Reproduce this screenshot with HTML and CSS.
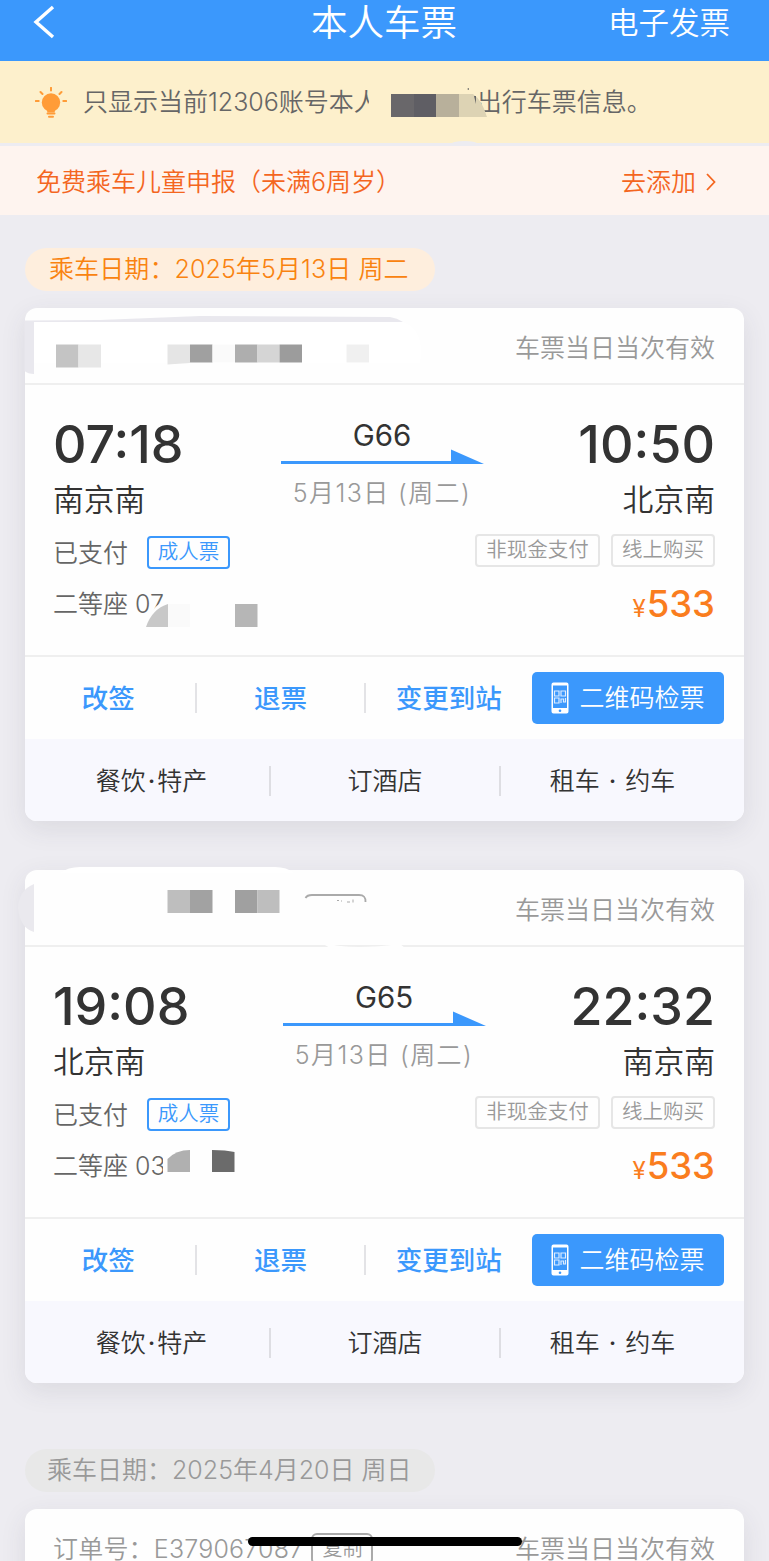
FILE: index.html
```html
<!DOCTYPE html>
<html lang="zh-CN">
<head>
    <meta charset="UTF-8">
    <meta name="viewport" content="width=device-width, initial-scale=1.0">
    <title>本人车票</title>
    <link rel="stylesheet" href="styles.css">
</head>
<body>
    <div class="header">
        <svg class="back" width="24" height="34" viewBox="0 0 24 34"><path d="M20 2 L3 17 L20 32" fill="none" stroke="#fff" stroke-width="3.4"/></svg>
        <h1>本人车票</h1>
        <span class="invoice">电子发票</span>
    </div>

    <div class="notice">
        <svg class="bulb" width="32" height="32" viewBox="0 0 32 32">
            <circle cx="16" cy="15.5" r="9.2" fill="#ff9c38"/>
            <path d="M11 20 L21 20 L19.5 25.5 L12.500 25.5 Z" fill="#ff9c38"/>
            <path d="M16 0.800 V3.500 M5.500 5 L7.500 7 M26.500 5 L24.500 7 M0.800 14 H3.700 M28.300 14 H31.200 M12.500 26.500 H19.500 M14 29.700 H18" stroke="#ff9c38" stroke-width="2" stroke-linecap="round"/>
        </svg>
        <span class="notice-text">只显示当前12306账号本人</span>
        <span class="notice-text notice-rest">出行车票信息。</span>
        <svg class="mask" width="130" height="66" viewBox="0 0 130 66">
            <path d="M3 15 H104 L110 27 V50 H-6 L1 33 Z" fill="#fdf0cc"/>
            <path d="M23 25 H46 V48 H23 Z" fill="#69676a"/>
            <path d="M46 25 H68 V48 H46 Z" fill="#5f5e64"/>
            <path d="M68 25 H91 V48 H68 Z" fill="#b8b09b"/>
            <path d="M91 25 H105 Q114 31 119 48 H91 Z" fill="#ddd3b4"/>
            <path d="M99 20 l2 -1 v2 z M106 27 h2 v8 z" fill="#666"/>
            <path d="M81 76 Q84 72 97 72 Q108 72 112 76 Z" fill="#edecf1"/>
        </svg>
    </div>

    <div class="child-bar">
        <span>免费乘车儿童申报（未满6周岁）</span>
        <span class="add">去添加
            <svg width="12" height="20" viewBox="0 0 12 20"><path d="M2 2 L9.500 10 L2 18" fill="none" stroke="#f4661f" stroke-width="1.800"/></svg>
        </span>
    </div>

    <div class="content">
        <div class="date-pill">乘车日期：2025年5月13日 周二</div>

        <div class="card">
            <div class="card-head">
                <span class="valid">车票当日当次有效</span>
                <svg class="mask head-mask" width="440" height="76" viewBox="0 0 440 76">
                    <path d="M24.500 12.500 L100 12 L200 8 L390 9 Q397 10 403 14 H34 V66 Q28 66 24.500 63 Z" fill="#e9e8ee"/>
                    <path d="M34 14 H403 Q425 22 420 55 H34 Z" fill="#fff"/>
                    <path d="M56 36.500 h22.500 v23 h-22.500 z" fill="#c4c4c4"/>
                    <path d="M78.500 36.500 h22.500 v23 h-22.500 z" fill="#e7e7e7"/>
                    <path d="M167.500 36.500 h22.500 v18.500 l-22.500 1.500 z" fill="#e5e5e5"/>
                    <path d="M190 36.500 h22.500 v18 h-22.500 z" fill="#a0a0a0"/>
                    <path d="M212.500 36.500 h22.500 v18 h-22.500 z" fill="#fafafa"/>
                    <path d="M235 36.500 h22.500 v18 h-22.500 z" fill="#aeaeae"/>
                    <path d="M257.500 36.500 h22 v18 h-22 z" fill="#d5d5d5"/>
                    <path d="M279.500 36.500 h22.500 v18 h-22.500 z" fill="#9c9c9c"/>
                    <path d="M346.500 36.500 h22.500 v18 h-22.500 z" fill="#f0f0f0"/>
                </svg>
            </div>
            <div class="card-body">
                <div class="trip">
                    <div class="stop">
                        <div class="time">07:18</div>
                        <div class="station">南京南</div>
                    </div>
                    <div class="train">
                        <div class="train-no">G66</div>
                        <svg class="arrow" width="203" height="16" viewBox="0 0 203 16"><path d="M0 12 H170 V0.500 L203 15 H0 Z" fill="#3b98fc"/></svg>
                        <div class="train-date">5月13日 (周二)</div>
                    </div>
                    <div class="stop stop-end">
                        <div class="time">10:50</div>
                        <div class="station">北京南</div>
                    </div>
                </div>
                <div class="status">
                    <span class="paid">已支付</span>
                    <span class="tag tag-blue">成人票</span>
                    <span class="tag tag-gray">非现金支付</span>
                    <span class="tag tag-gray">线上购买</span>
                </div>
                <div class="seat">
                    <span>二等座 07</span>
                    <span class="price"><small>¥</small>533</span>
                    <svg class="mask seat-mask" width="150" height="50" viewBox="0 0 150 50">
                        <path d="M9 38 Q14 17 32 10 H120 V40 H9 Z" fill="#fefefe"/>
                        <path d="M10 38 Q16 20 32 15 V38 Z" fill="#c8c8c8"/>
                        <path d="M32 15 h22 v23 h-22 z" fill="#fafafa"/>
                        <path d="M99 15 h22.500 v23 h-22.500 z" fill="#b6b6b6"/>
                    </svg>
                </div>
            </div>
            <div class="actions">
                <span class="action">改签</span>
                <span class="action">退票</span>
                <span class="action">变更到站</span>
                <span class="btn-qr">
                    <svg width="18" height="32" viewBox="0 0 18 32">
                        <path fill-rule="evenodd" d="M2.500 0.500 H15.500 Q17.500 0.500 17.500 2.500 V29.500 Q17.500 31.500 15.500 31.500 H2.500 Q0.500 31.500 0.500 29.500 V2.500 Q0.500 0.500 2.500 0.500 Z M2 3.500 V26 H16 V3.500 Z" fill="#fff"/>
                        <path d="M3.500 9 h4.500 v5 h-4.500 z M10 9 h4.500 v5 h-4.500 z M3.500 16 h4.500 v5 h-4.500 z M10 21 v-4 h2.500 v3 h2 v-4" fill="none" stroke="#dcecff" stroke-width="1.200"/>
                        <circle cx="9" cy="28.700" r="1.300" fill="#3b98fc"/>
                    </svg>
                    二维码检票
                </span>
            </div>
            <div class="services">
                <span>餐饮<i class="dot">·</i>特产</span>
                <span>订酒店</span>
                <span>租车 <i class="dot">·</i> 约车</span>
            </div>
        </div>

        <div class="card">
            <div class="card-head">
                <span class="valid">车票当日当次有效</span>
                <svg class="mask head-mask head-mask-tall" width="440" height="86" viewBox="0 -5 440 86">
                    <path d="M60 3 Q68 -3 80 -3 H275 Q287 -3 294 3 Z" fill="#fff"/>
                    <path d="M34 14 Q19 20 18 38 Q20 58 34 62 Z" fill="#eae9ee"/>
                    <path d="M320 72 Q350 81 400 74 L405 78 H330 Z" fill="#fefefe"/>
                    <path d="M167.500 20 h22.500 v23 h-22.500 z" fill="#bebebe"/>
                    <path d="M190 20 h22.500 v23 h-22.500 z" fill="#a2a2a2"/>
                    <path d="M235 20 h22.500 v23 h-22.500 z" fill="#a0a0a0"/>
                    <path d="M257.500 20 h22 v23 h-22 z" fill="#bebebe"/>
                    <path d="M305.500 28 Q307 25 312 25 H359 Q366 25 365.500 32" fill="none" stroke="#aaa" stroke-width="1.800"/>
                    <path d="M337 30.500 h2 M341 31 h1 M347 32 h3 M353 29.500 v3" fill="none" stroke="#aaa"/>
                </svg>
            </div>
            <div class="card-body">
                <div class="trip">
                    <div class="stop">
                        <div class="time">19:08</div>
                        <div class="station">北京南</div>
                    </div>
                    <div class="train train-shift">
                        <div class="train-no">G65</div>
                        <svg class="arrow" width="203" height="16" viewBox="0 0 203 16"><path d="M0 12 H170 V0.500 L203 15 H0 Z" fill="#3b98fc"/></svg>
                        <div class="train-date">5月13日 (周二)</div>
                    </div>
                    <div class="stop stop-end">
                        <div class="time">22:32</div>
                        <div class="station">南京南</div>
                    </div>
                </div>
                <div class="status">
                    <span class="paid">已支付</span>
                    <span class="tag tag-blue">成人票</span>
                    <span class="tag tag-gray">非现金支付</span>
                    <span class="tag tag-gray">线上购买</span>
                </div>
                <div class="seat">
                    <span>二等座 03</span>
                    <span class="price"><small>¥</small>533</span>
                    <svg class="mask seat-mask" width="150" height="50" viewBox="0 0 150 50">
                        <path d="M27 0 H120 V42 H27 Z" fill="#fefefe"/>
                        <path d="M31.500 21 V8 Q40 -1 54 -1 V21 Z" fill="#b0b0b0"/>
                        <path d="M76 -1 Q90 -1 98.500 1 V21 H76 Z" fill="#6b6b6b"/>
                    </svg>
                </div>
            </div>
            <div class="actions">
                <span class="action">改签</span>
                <span class="action">退票</span>
                <span class="action">变更到站</span>
                <span class="btn-qr">
                    <svg width="18" height="32" viewBox="0 0 18 32">
                        <path fill-rule="evenodd" d="M2.500 0.500 H15.500 Q17.500 0.500 17.500 2.500 V29.500 Q17.500 31.500 15.500 31.500 H2.500 Q0.500 31.500 0.500 29.500 V2.500 Q0.500 0.500 2.500 0.500 Z M2 3.500 V26 H16 V3.500 Z" fill="#fff"/>
                        <path d="M3.500 9 h4.500 v5 h-4.500 z M10 9 h4.500 v5 h-4.500 z M3.500 16 h4.500 v5 h-4.500 z M10 21 v-4 h2.500 v3 h2 v-4" fill="none" stroke="#dcecff" stroke-width="1.200"/>
                        <circle cx="9" cy="28.700" r="1.300" fill="#3b98fc"/>
                    </svg>
                    二维码检票
                </span>
            </div>
            <div class="services">
                <span>餐饮<i class="dot">·</i>特产</span>
                <span>订酒店</span>
                <span>租车 <i class="dot">·</i> 约车</span>
            </div>
        </div>

        <div class="date-pill date-past">乘车日期：2025年4月20日 周日</div>

        <div class="card">
            <div class="card-head">
                <span class="order">订单号：E379067087</span>
                <span class="copy">复制</span>
                <span class="valid">车票当日当次有效</span>
            </div>
        </div>
    </div>

    <div class="home-bar"></div>
</body>
</html>
```

FILE: styles.css
```css
* {
    margin: 0;
    padding: 0;
    box-sizing: border-box;
}

body {
    position: relative;
    width: 769px;
    height: 1561px;
    overflow: hidden;
    font-family: Inter, 'Noto Sans CJK SC', sans-serif;
    font-size: 25px;
    font-weight: 350;
    line-height: 1;
    white-space: nowrap;
    color: #333;
    background: #edecf1;
}

svg {
    display: block;
    flex: none;
}

.mask {
    position: absolute;
    overflow: visible;
}

.header {
    display: grid;
    grid-template-columns: 1fr auto 1fr;
    height: 61px;
    padding: 0 39px 16px 33px;
    align-items: center;
    background: #3b98fc;
    color: #fff;
}

.back {
    margin-top: -2px;
}

.header h1 {
    padding: 2px 0 0 5px;
    font-size: 36.5px;
    font-weight: 350;
}

.invoice {
    justify-self: end;
    padding-top: 1px;
    font-size: 30.5px;
}

.notice {
    position: relative;
    display: flex;
    align-items: center;
    height: 82px;
    padding: 1px 0 0 35px;
    background: #fdf0cc;
    color: #666;
}

.notice-text {
    margin-left: 16px;
}

.notice-rest {
    margin-left: 98px;
}

.notice .mask {
    left: 368px;
    top: 8px;
}

.child-bar {
    display: flex;
    align-items: center;
    justify-content: space-between;
    height: 69px;
    margin-top: 3px;
    padding: 3px 52px 0 36px;
    background: #fef4ef;
    color: #f4661f;
}

.add {
    display: flex;
    align-items: center;
    gap: 9px;
}

.content {
    padding: 33px 25px 0;
}

.date-pill {
    display: flex;
    align-items: center;
    width: 410px;
    height: 43px;
    margin-bottom: 17px;
    padding-left: 24px;
    border-radius: 22px;
    background: #feeedd;
    color: #f98310;
    letter-spacing: 0.1px;
}

.date-past {
    margin-top: 66px;
    padding-left: 22px;
    background: #e8e8e8;
    color: #999;
    letter-spacing: 0;
}

.card {
    margin-bottom: 49px;
    border-radius: 12px;
    background: #fefefe;
    box-shadow: 0 8px 26px rgba(60, 60, 80, 0.1);
}

.card-head {
    position: relative;
    display: flex;
    align-items: center;
    height: 77px;
    padding: 5px 29px 0 28px;
    border-bottom: 2px solid #efefef;
    color: #999;
}

.head-mask {
    left: -25px;
    top: 0;
}

.head-mask-tall {
    top: -5px;
}

.order {
    letter-spacing: 0.2px;
}

.valid {
    margin-left: auto;
}

.copy {
    margin-left: 8px;
    padding: 4px 9px;
    border: 2px solid #aaa;
    border-radius: 6px;
    font-size: 20px;
}

.card-body {
    height: 272px;
    padding: 33px 29px 0 28px;
    border-bottom: 2px solid #efefef;
}

.trip {
    display: grid;
    grid-template-columns: 1fr 203px 1fr;
    height: 117px;
}

.stop-end {
    text-align: right;
}

.time {
    font-size: 52px;
    font-weight: 450;
    line-height: 54px;
}

.station {
    font-size: 30.8px;
    line-height: 56px;
}

.train {
    display: flex;
    flex-direction: column;
    align-items: center;
    transform: translateX(-2px);
}

.train-shift {
    transform: none;
}

.train-no {
    font-size: 29.5px;
    font-weight: 400;
    line-height: 34px;
}

.arrow {
    margin: -3px 0 16px;
}

.train-date {
    letter-spacing: 1.4px;
    color: #999;
}

.status {
    display: flex;
    align-items: center;
    height: 36px;
    color: #666;
}

.tag {
    display: flex;
    align-items: center;
    justify-content: center;
    height: 33px;
    border-radius: 4px;
    font-size: 20.5px;
}

.tag-blue {
    width: 83px;
    margin: -1px auto 0 19px;
    border: 2px solid #3b98fc;
    color: #3b98fc;
}

.tag-gray {
    width: 125px;
    margin: -5px 0 0 11px;
    border: 2px solid #e6e6e6;
    color: #999;
}

.tag-gray:last-child {
    width: 104px;
}

.seat {
    position: relative;
    display: flex;
    align-items: center;
    justify-content: space-between;
    height: 66px;
    color: #666;
}

.seat-mask {
    left: 83px;
    top: 18px;
}

.price {
    font-size: 36.5px;
    font-weight: 500;
    color: #fa7d1e;
}

.price small {
    margin-right: 1px;
    font-size: 24px;
    font-weight: 400;
}

.actions {
    display: flex;
    align-items: center;
    height: 82px;
    padding-right: 20px;
}

.action {
    flex: 1;
    text-align: center;
    font-size: 26.5px;
    font-weight: 500;
    line-height: 30px;
    color: #3b98fc;
    border-left: 2px solid #e3e3e6;
}

.action:first-child {
    padding-right: 4px;
    border-left: none;
}

.btn-qr {
    display: flex;
    align-items: center;
    justify-content: center;
    gap: 10px;
    width: 192px;
    height: 52px;
    border-radius: 5px;
    background: #3b98fc;
    color: #fff;
}

.services {
    display: grid;
    grid-template-columns: 235px 230px 1fr;
    align-items: center;
    height: 82px;
    padding: 1px 20px 0 9px;
    border-radius: 0 0 12px 12px;
    background: #f8f8fe;
}

.services span {
    text-align: center;
    line-height: 30px;
    border-left: 2px solid #dedee3;
}

.services span:first-child {
    border-left: none;
}

.dot {
    padding: 0 2px;
    font-style: normal;
    font-weight: 500;
}

.home-bar {
    position: absolute;
    left: 248px;
    top: 1537px;
    width: 274px;
    height: 9px;
    border-radius: 5px;
    background: #000;
}
```
